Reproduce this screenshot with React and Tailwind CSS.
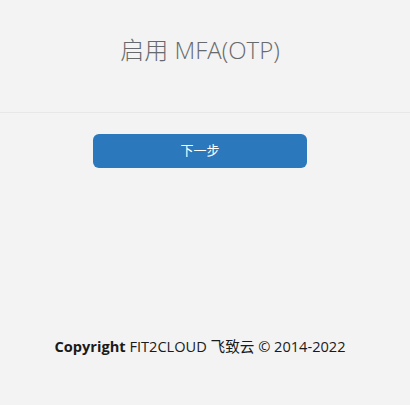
import React from 'react';

export default function App() {
  return (
    <div className="min-h-[405px] w-full bg-[#f3f3f3] flex flex-col" style={{ fontFamily: '"Open Sans", "Noto Sans CJK SC", sans-serif' }}>
      {/* Header */}
      <div className="h-[113px] border-b border-[#e7e7e7] flex items-center justify-center pb-[12px] pr-[10px]">
        <h1 className="text-[24px] font-light text-[#676a6c] leading-none">启用 MFA(OTP)</h1>
      </div>

      {/* Action */}
      <div className="flex justify-center pt-[21px] pr-[10px]">
        <button className="w-[214px] h-[34px] rounded-[6px] bg-[#2b78bd] text-white text-[13px]">
          下一步
        </button>
      </div>

      {/* Footer */}
      <div className="mt-[168px] text-center text-[14.6px] text-[#1a1a1a] pr-[10px]">
        <strong className="font-bold">Copyright</strong> FIT2CLOUD 飞致云 © 2014-2022
      </div>
    </div>
  );
}
